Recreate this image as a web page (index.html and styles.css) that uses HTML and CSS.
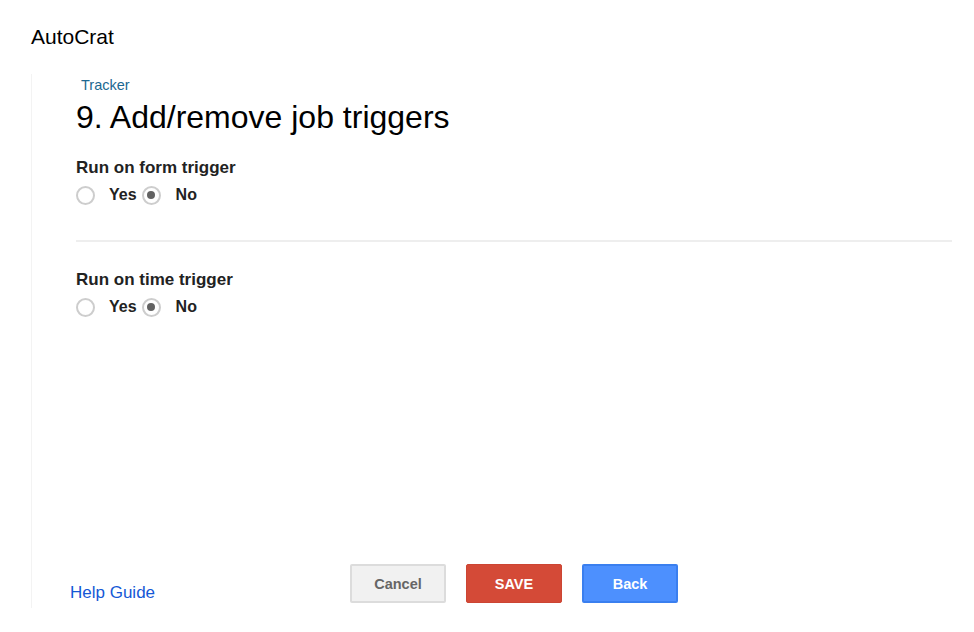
FILE: index.html
```html
<!DOCTYPE html>
<html>
<head>
    <meta charset="UTF-8">
    <meta name="viewport" content="width=device-width, initial-scale=1.0">
    <title>AutoCrat - Job triggers</title>
    <link rel="stylesheet" href="styles.css">
</head>
<body>
    <header class="app-title">AutoCrat</header>

    <main class="panel">
        <div class="crumb">Tracker</div>
        <h1>9. Add/remove job triggers</h1>

        <section class="trigger-group">
            <div class="trigger-label">Run on form trigger</div>
            <div class="radio-row">
                <input type="radio" name="formTrigger" id="formYes">
                <label for="formYes" class="opt-yes">Yes</label>
                <input type="radio" name="formTrigger" id="formNo" checked>
                <label for="formNo" class="opt-no">No</label>
            </div>
        </section>

        <hr class="divider">

        <section class="trigger-group">
            <div class="trigger-label">Run on time trigger</div>
            <div class="radio-row">
                <input type="radio" name="timeTrigger" id="timeYes">
                <label for="timeYes" class="opt-yes">Yes</label>
                <input type="radio" name="timeTrigger" id="timeNo" checked>
                <label for="timeNo" class="opt-no">No</label>
            </div>
        </section>

        <footer class="actions">
            <a href="#" class="help">Help Guide</a>
            <div class="buttons">
                <button class="btn btn-cancel">Cancel</button>
                <button class="btn btn-save">SAVE</button>
                <button class="btn btn-back">Back</button>
            </div>
        </footer>
    </main>
</body>
</html>
```

FILE: styles.css
```css
body {
    font-family: "Liberation Sans", Arial, sans-serif;
    margin: 0;
    padding: 0;
    background-color: #fff;
    color: #000;
    height: 100vh;
    display: flex;
    flex-direction: column;
}
.app-title {
    font-size: 21px;
    line-height: 24px;
    padding: 25px 0 0 31px;
}
.panel {
    flex: 1;
    margin: 25px 22px 24px 31px;
    padding: 2px 0 5px 44px;
    border-left: 1px solid #f3f3f3;
    display: flex;
    flex-direction: column;
}
.crumb {
    font-size: 14.5px;
    line-height: 18px;
    color: #1c6891;
    padding-left: 5px;
}
h1 {
    font-size: 32px;
    font-weight: normal;
    line-height: 36px;
    margin: 5px 0 0 0;
}
.trigger-group {
    margin-top: 23px;
}
.divider + .trigger-group {
    margin-top: 28px;
}
.trigger-label {
    font-size: 17px;
    font-weight: bold;
    line-height: 20px;
    color: #222;
}
.radio-row {
    display: flex;
    align-items: center;
    height: 24px;
    margin-top: 5px;
    font-size: 16px;
    font-weight: bold;
    color: #222;
}
.radio-row input {
    appearance: none;
    -webkit-appearance: none;
    box-sizing: border-box;
    width: 19px;
    height: 19px;
    margin: 0;
    border: 2px solid #cdcdcd;
    border-radius: 50%;
    background: #fff;
    position: relative;
}
.radio-row input:checked::after {
    content: "";
    position: absolute;
    top: 3.5px;
    left: 3.5px;
    width: 8px;
    height: 8px;
    border-radius: 50%;
    background: #626262;
}
.opt-yes {
    margin: 0 5px 0 14px;
}
.opt-no {
    margin-left: 15px;
}
.divider {
    border: 0;
    border-top: 2px solid #eee;
    margin: 33px 0 0 0;
}
.actions {
    margin-top: auto;
    margin-left: -6px;
    display: grid;
    grid-template-columns: 280px auto;
    align-items: end;
}
.help {
    font-size: 17px;
    line-height: 20px;
    color: #1558d6;
    text-decoration: none;
}
.buttons {
    display: flex;
    gap: 20px;
}
.btn {
    width: 96px;
    height: 39px;
    border-radius: 2px;
    font-family: "Liberation Sans", Arial, sans-serif;
    font-size: 14.5px;
    font-weight: bold;
    cursor: pointer;
}
.btn-cancel {
    background: #f1f1f1;
    border: 2px solid #dcdcdc;
    color: #666;
}
.btn-save {
    background: #d44a37;
    border: 1px solid #cc4533;
    color: #fff;
}
.btn-back {
    background: #4d90fe;
    border: 2px solid #3a7fef;
    color: #fff;
}
```
